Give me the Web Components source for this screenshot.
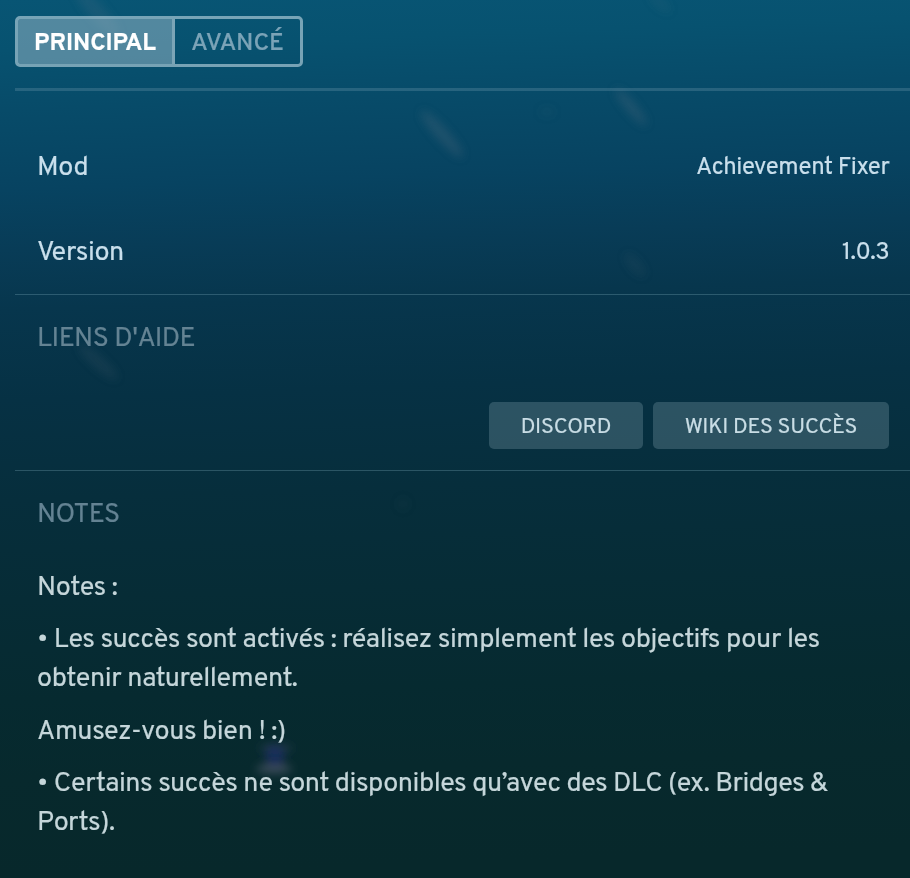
<!DOCTYPE html>
<html lang="fr">
<head>
<meta charset="utf-8">
<title>Achievement Fixer</title>
<style>
html, body { margin: 0; height: 100%; overflow: hidden; background: #062a31; }
</style>
</head>
<body>
<script>
const define = (name, markup) => customElements.define(name, class extends HTMLElement {
  constructor() {
    super();
    this.attachShadow({ mode: 'open' }).innerHTML = markup;
  }
});

define('water-backdrop', `
<style>
  :host { position: absolute; inset: 0; z-index: -1; overflow: hidden;
    background: linear-gradient(178deg, #085574 0, #075270 50px, #074b69 110px, #074361 190px, #083c57 250px, #07364d 310px, #063144 400px, #062e3c 500px, #062c36 600px, #062a30 700px, #07292d 780px, #07282b 878px); }
  svg { width: 100%; height: 100%; display: block; }
</style>
<svg viewBox="0 0 910 878">
  <defs>
    <filter id="b" x="-100%" y="-100%" width="300%" height="300%"><feGaussianBlur stdDeviation="5"/></filter>
    <filter id="s" x="-100%" y="-100%" width="300%" height="300%"><feGaussianBlur stdDeviation="4"/></filter>
  </defs>
  <g filter="url(#b)" fill="#8a8790">
    <ellipse cx="442" cy="134" rx="31" ry="6" transform="rotate(48 442 134)" opacity=".19"/>
    <ellipse cx="631" cy="107" rx="24" ry="5" transform="rotate(50 631 107)" opacity=".19"/>
    <ellipse cx="97" cy="12" rx="32" ry="8" transform="rotate(48 97 12)" opacity=".12"/>
    <ellipse cx="98" cy="362" rx="26" ry="6" transform="rotate(42 98 362)" opacity=".11"/>
    <ellipse cx="635" cy="265" rx="15" ry="6" transform="rotate(50 635 265)" opacity=".08"/>
    <ellipse cx="660" cy="3" rx="14" ry="5" transform="rotate(40 660 3)" opacity=".08"/>
    <ellipse cx="547" cy="112" rx="9" ry="5" opacity=".05"/>
    <ellipse cx="403" cy="504" rx="6" ry="7" opacity=".05"/>
  </g>
  <g filter="url(#s)">
    <ellipse cx="274" cy="769" rx="18" ry="5" fill="#7c7990" opacity=".4"/>
    <ellipse cx="276" cy="748" rx="17" ry="5" fill="#55597a" opacity=".25"/>
    <ellipse cx="275" cy="756" rx="10" ry="11" fill="#1b2f70" opacity=".6"/>
  </g>
</svg>`);

define('tab-bar', `
<style>
  :host { display: flex; width: 288px; box-sizing: border-box; height: 51px;
    border: 3px solid rgba(180,208,220,.65); border-radius: 5px; }
</style>
<slot></slot>`);

define('tab-item', `
<style>
  :host { display: block; box-sizing: border-box; flex: 1; text-align: center; height: 45px; line-height: 45px; padding-top: 2px;
    font-size: 24.5px; color: #7ba3b7; font-weight: 500; letter-spacing: 0; white-space: nowrap; }
  :host([active]) { flex: 0 0 157px; font-size: 24px; padding-top: 3px; color: #fff; font-weight: 700; background: rgba(165,195,208,.48);
    border-right: 3px solid rgba(165,195,208,.5); }
</style>
<slot></slot>`);

define('option-row', `
<style>
  :host { display: flex; align-items: center; justify-content: space-between; height: 85px; padding: 0 21px 0 22px; color: #c9dfec; }
  .label { padding-top: 2px; }
  .value { font-size: 24px; padding-top: 3px; letter-spacing: -.45px; margin-right: -.3px; }
</style>
<span class="label"><slot></slot></span><span class="value"><slot name="value"></slot></span>`);

define('option-section', `
<style>
  :host { display: block; border-top: 1px solid rgba(140,185,200,.28); box-sizing: border-box; }
  h2 { margin: 0; padding: 2px 22px 0; font: inherit; line-height: 84px; height: 84px; box-sizing: border-box; color: #648393; letter-spacing: -.5px; }
</style>
<h2><slot name="title"></slot></h2><slot></slot>`);

define('button-row', `
<style>
  :host { display: flex; justify-content: flex-end; gap: 10px; padding: 23px 21px 0 22px; }
</style>
<slot></slot>`);

define('link-button', `
<style>
  :host { display: block; }
  button { display: block; width: var(--w); height: 47px; border: 0; border-radius: 5px; margin: 0; padding: 4px 0 0;
    background: rgba(130,160,175,.31); color: #c9dde5; font: inherit; font-size: 21.6px; line-height: 43px; letter-spacing: -.2px; white-space: nowrap; }
</style>
<button><slot></slot></button>`);

define('note-text', `
<style>
  :host { display: block; padding: 0 22px; line-height: 39.1px; color: #c5d6da; }
  ::slotted(p) { margin: 0 0 13.3px; white-space: nowrap; }
</style>
<slot></slot>`);

define('settings-panel', `
<style>
  :host { display: block; position: relative; z-index: 0; box-sizing: border-box; width: 910px; height: 878px; overflow: hidden;
    padding: 16px 0 0 15px; font-family: Overpass, Roboto, sans-serif; font-size: 27px; letter-spacing: -.42px;
    -webkit-text-stroke: .22px currentColor; }
  .rule { height: 3px; margin-top: 21px; background: rgba(115,155,175,.3); }
  .rows { padding: 33px 0 0; height: 203px; box-sizing: border-box; }
</style>
<water-backdrop></water-backdrop>
<slot name="tabs"></slot>
<div class="rule"></div>
<div class="rows"><slot name="rows"></slot></div>
<slot></slot>`);
</script>
<settings-panel>
  <tab-bar slot="tabs"><tab-item active>PRINCIPAL</tab-item><tab-item>AVANCÉ</tab-item></tab-bar>
  <option-row slot="rows">Mod<span slot="value">Achievement Fixer</span></option-row>
  <option-row slot="rows">Version<span slot="value">1.0.3</span></option-row>
  <option-section style="height:176px"><span slot="title">LIENS D'AIDE</span>
    <button-row><link-button style="--w:154px">DISCORD</link-button><link-button style="--w:236px">WIKI DES SUCCÈS</link-button></button-row>
  </option-section>
  <option-section><span slot="title">NOTES</span>
    <note-text>
      <p style="margin-top:14px">Notes :</p>
      <p>• Les succès sont activés : réalisez simplement les objectifs pour les<br>obtenir naturellement.</p>
      <p>Amusez-vous bien ! :)</p>
      <p style="letter-spacing:-.46px">• Certains succès ne sont disponibles qu’avec des DLC (ex. Bridges &amp;<br>Ports).</p>
    </note-text>
  </option-section>
</settings-panel>
</body>
</html>
